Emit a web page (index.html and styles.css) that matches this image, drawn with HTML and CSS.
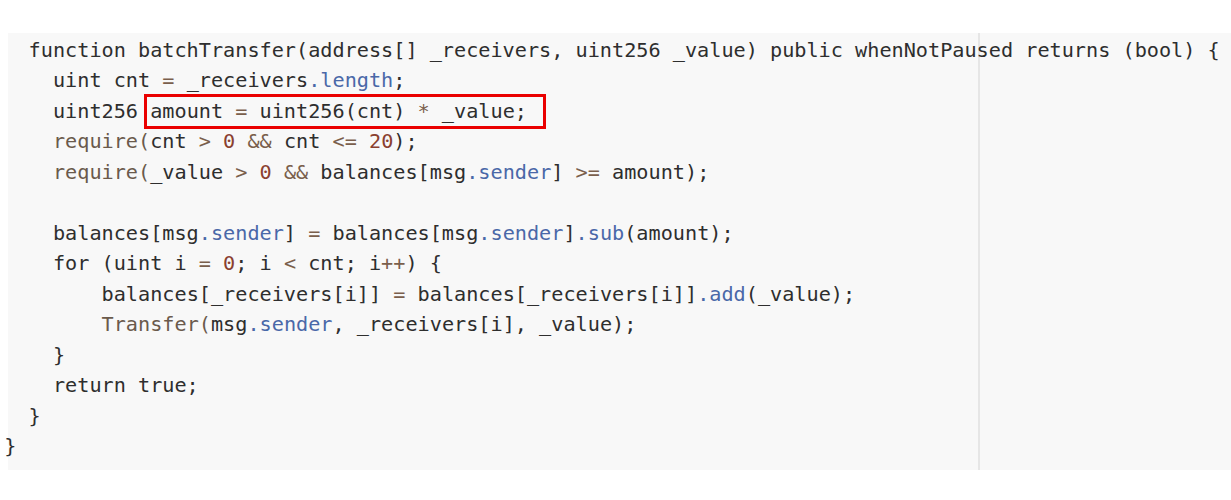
FILE: index.html
```html
<!DOCTYPE html>
<html>
<head>
<meta charset="utf-8">
<link rel="stylesheet" href="styles.css">
</head>
<body>
<div class="panel">
<div class="code">
<div class="ln">  function batchTransfer(address[] _receivers, uint256 _value) public whenNotPaused returns (bool) {</div>
<div class="ln">    uint cnt <span class="op">=</span> _receivers<span class="mb">.length</span>;</div>
<div class="ln">    uint256 <span class="hl">amount <span class="op">=</span> uint256(cnt) <span class="op">*</span> _value;</span></div>
<div class="ln">    <span class="fn">require(</span>cnt <span class="op">&gt;</span> <span class="num">0</span> <span class="op">&amp;&amp;</span> cnt <span class="op">&lt;=</span> <span class="num">20</span>);</div>
<div class="ln">    <span class="fn">require(</span>_value <span class="op">&gt;</span> <span class="num">0</span> <span class="op">&amp;&amp;</span> balances[msg<span class="mb">.sender</span>] <span class="op">&gt;=</span> amount);</div>
<div class="ln"> </div>
<div class="ln">    balances[msg<span class="mb">.sender</span>] <span class="op">=</span> balances[msg<span class="mb">.sender</span>]<span class="mb">.sub</span>(amount);</div>
<div class="ln">    for (uint i <span class="op">=</span> <span class="num">0</span>; i <span class="op">&lt;</span> cnt; i<span class="op">++</span>) {</div>
<div class="ln">    <span class="ig">    </span>balances[_receivers[i]] <span class="op">=</span> balances[_receivers[i]]<span class="mb">.add</span>(_value);</div>
<div class="ln">    <span class="ig">    </span><span class="fn">Transfer(</span>msg<span class="mb">.sender</span>, _receivers[i], _value);</div>
<div class="ln">    }</div>
<div class="ln">    return true;</div>
<div class="ln">  }</div>
<div class="ln">}</div>
</div>
</div>
</body>
</html>
```
FILE: styles.css
```css
html, body {
  margin: 0;
  padding: 0;
  background: #ffffff;
}
.panel {
  margin: 33px 0 0 8px;
  height: 437px;
  box-sizing: border-box;
  background:
    linear-gradient(to right, transparent 970px, #e6e6e6 970px, #e6e6e6 972px, transparent 972px),
    #f8f8f8;
}
.code {
  margin-left: -3.7px;
  padding-top: 1.5px;
  font-family: "DejaVu Sans Mono", "Liberation Mono", monospace;
  font-size: 20.2px;
  color: #2e2e2e;
}
.ln {
  white-space: pre;
  height: 30.5px;
  line-height: 30.5px;
}
.op { color: #7a5f4c; }
.num { color: #8a4030; }
.mb { color: #4a68a8; }
.fn { color: #6a5a4c; }
.hl {
  display: inline-block;
  position: relative;
  height: 30.5px;
  vertical-align: top;
}
.hl::after {
  content: "";
  position: absolute;
  left: -6px;
  right: -19px;
  top: -1.5px;
  height: 35px;
  box-sizing: border-box;
  border: 3px solid #ea0000;
}
.ig {
  display: inline-block;
  height: 30.5px;
  vertical-align: top;
  background-image: linear-gradient(to bottom, #cfcfcf 50%, transparent 50%);
  background-size: 1px 2px;
  background-repeat: repeat-y;
  background-position: -1px 0;
}
```
